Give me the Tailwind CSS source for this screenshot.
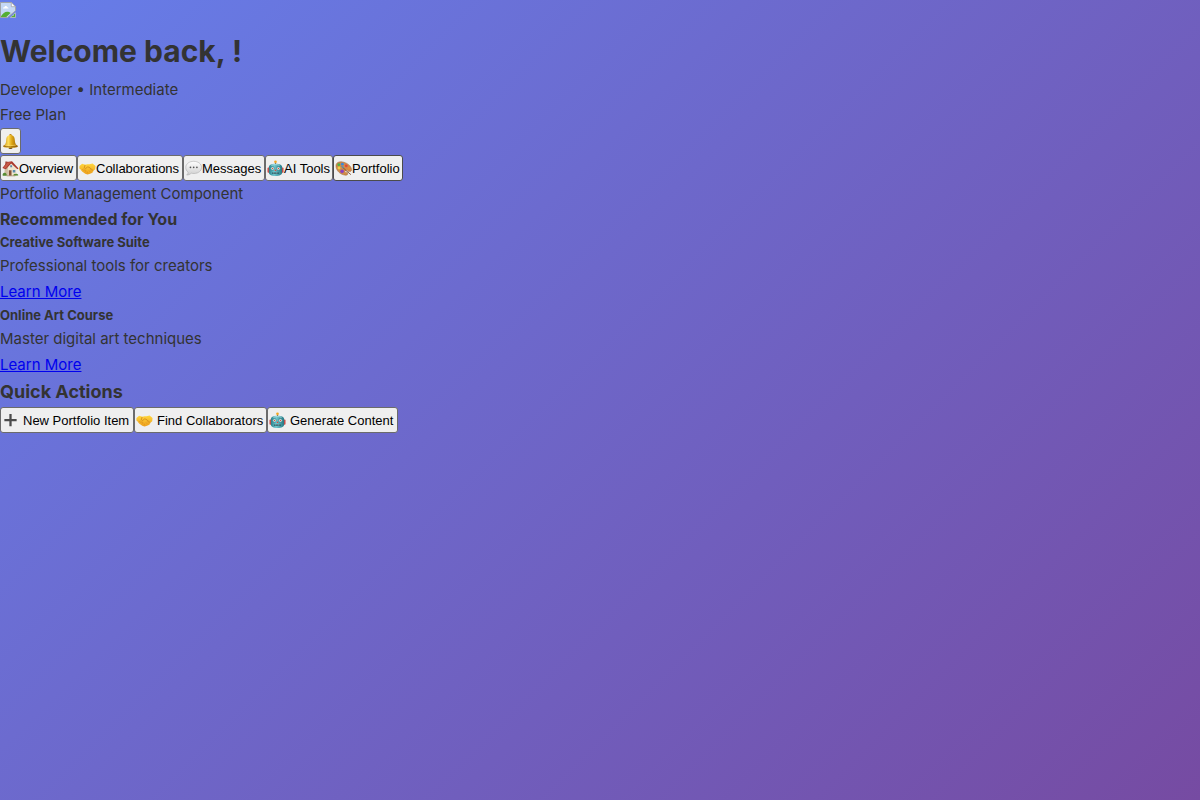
<!DOCTYPE html>
<html lang="en">
<head>
<meta charset="utf-8">
<meta name="viewport" content="width=device-width, initial-scale=1">
<title>Dashboard</title>
<script src="https://cdn.jsdelivr.net/npm/@tailwindcss/browser@4"></script>
</head>
<body class="min-h-screen bg-[linear-gradient(135deg,#667eea_0%,#764ba2_100%)] font-[Inter,sans-serif] text-[15px] leading-[26px] text-[#333]">

<svg class="absolute size-0" aria-hidden="true">
  <defs>
    <linearGradient id="gold" x1="0" x2="1"><stop offset="0" stop-color="#b87a08"/><stop offset=".35" stop-color="#ffdf5c"/><stop offset=".6" stop-color="#dca414"/><stop offset="1" stop-color="#966008"/></linearGradient>
    <linearGradient id="hand" x1="0" y1="0" x2="0" y2="1"><stop offset="0" stop-color="#ffd63d"/><stop offset="1" stop-color="#eea11d"/></linearGradient>
    <linearGradient id="teal" x1="0" x2="1"><stop offset="0" stop-color="#277e8b"/><stop offset=".4" stop-color="#70c8cf"/><stop offset="1" stop-color="#257783"/></linearGradient>
    <linearGradient id="bubble" x1="0" y1="0" x2="0" y2="1"><stop offset="0" stop-color="#fff"/><stop offset="1" stop-color="#cfcfcf"/></linearGradient>
  </defs>
  <symbol id="house" viewBox="0 0 18 18">
    <path d="M2.8 8 9.5 2.7l5.7 5.8v7.8l-9 .6-3.4-1.6z" fill="#efe4cd"/>
    <path d="m2.8 8 3.4-1v9.9l-3.4-1.6z" fill="#cdbd9f"/>
    <path d="M3.5 1.5h2.3V5L3.5 6.5z" fill="#a24c3c"/>
    <path d="m.4 8.6 5-6.5 5.2-.9 6.9 7.8-1.2.8-6.6-6.2-5.6 6.1z" fill="#a9372d"/>
    <path d="m1.5 8.2 4.3-5.5 3.6-.5L4 8.8z" fill="#c65a47"/>
    <path d="M7.2 10.8h2.9v5.8l-2.9.2z" fill="#865237"/>
    <path d="M11.4 10.5h2.7v2.8h-2.7zM8.7 5.6h2v2h-2z" fill="#5b8bad"/>
    <path d="M.6 16.2c0-2 1-3 2.4-2.7 1.4.2 2.2 1.4 2 3.2H1zM12 16.6c.1-1.3 1-2.1 2.3-1.9 1.5-.7 3 .2 2.9 1.6z" fill="#568b31"/>
    <path d="m5 16.5 9-.2v.9H5z" fill="#a88c6a"/>
  </symbol>
  <symbol id="handshake" viewBox="0 0 18 18">
    <path d="M.5 6.300 3.300 4l3.400 1 2.200-.6 2.200.2 3.300-.9 3.100 2.700-.3 3.500-2 1.600-1 2.100-3.200 1.200-2 .6-2.400-.9-3.300-2.200-1.800-2.400L.4 9z" fill="url(#hand)"/>
    <path d="m6.500 5.200-.9 3 1.300.9 2.100-1.700 1.600.2 4.500 3.700" fill="none" stroke="#c77b13" stroke-width=".7"/>
    <path d="m3 10.600 1.600-1.100 1.100.8-1.100 1.500m1.100-1 1.500.2-.8 2m1.500-1.200 1.100.8-.4 1.600m1.600-3 2.200 1.500m-1-3 2.200 2" fill="none" stroke="#dc8d18" stroke-width=".6"/>
  </symbol>
  <symbol id="speech" viewBox="0 0 18 18">
    <path d="M9.200 1.400c4.700 0 8.300 2.700 8.300 6.400s-3.400 6.500-8 6.500c-1 0-2-.1-2.900-.4-1 1.200-2.700 2-4.800 2 1-.9 1.500-1.800 1.500-3C1.700 11.700.8 9.900.8 7.900.8 4.200 4.500 1.400 9.200 1.400z" fill="url(#bubble)" stroke="#aaa" stroke-width=".6"/>
    <circle cx="5.800" cy="7.800" r=".9" fill="#555"/><circle cx="9.200" cy="7.800" r=".9" fill="#555"/><circle cx="12.600" cy="7.800" r=".9" fill="#555"/>
  </symbol>
  <symbol id="robot" viewBox="0 0 18 18">
    <path d="M8.400 2.500h1.200V5H8.400z" fill="#9a6c4b"/><circle cx="9" cy="1.900" r="1.400" fill="#f4a720"/>
    <rect x=".5" y="8" width="2.600" height="5.500" rx="1" fill="#d34b45"/><rect x="14.900" y="8" width="2.600" height="5.500" rx="1" fill="#d34b45"/>
    <path d="M2 7.500C2.200 5 5 4 9 4s6.800 1 7 3.500V13c0 2.700-2.600 4-7 4s-7-1.300-7-4z" fill="url(#teal)"/>
    <path d="M4.700 5.700C6.500 4.600 11.500 4.600 13.300 5.700" fill="none" stroke="#b9e7e7" stroke-width=".8"/>
    <circle cx="5.900" cy="9" r="1.900" fill="#d9f4ef" stroke="#287582" stroke-width=".6"/><circle cx="12.100" cy="9" r="1.900" fill="#d9f4ef" stroke="#287582" stroke-width=".6"/>
    <circle cx="5.900" cy="9" r=".8" fill="#d05443"/><circle cx="12.100" cy="9" r=".8" fill="#d05443"/>
    <path d="m9 9.700 1.100 1.900H7.900z" fill="#d74c43"/><rect x="5.400" y="12.900" width="7.200" height="1.900" rx=".9" fill="#285f69"/><path d="M6.500 13.700h5" stroke="#d5edeb" stroke-width=".7" stroke-dasharray="1 .5"/>
  </symbol>
  <symbol id="palette" viewBox="0 0 18 18">
    <path d="M1 6.200C1 2.800 4.100 1.500 7.800 2c4.700.7 9.500 4.100 9.700 8 .1 2-1.200 2.300-2.700 2-1.700-.3-2.400.4-1.600 1.800.8 1.500-.3 2.500-2.200 2.300C5.900 15.600 1 11.500 1 6.200z" fill="#d08b4a" stroke="#9a6030" stroke-width=".5"/>
    <ellipse cx="12.300" cy="12.100" rx="1.500" ry="1" fill="#f0ece8"/>
    <circle cx="7.800" cy="4.400" r="1.500" fill="#3a87dc"/><circle cx="4" cy="5" r="1.500" fill="#4bb247"/><circle cx="4.300" cy="8.500" r="1.500" fill="#efd13e"/><circle cx="7.500" cy="12" r="1.900" fill="#8b3fc1"/><circle cx="11.900" cy="6.200" r="1.500" fill="#e64535"/><circle cx="14.700" cy="9" r="1.200" fill="#f18b30"/>
    <path d="m7.500 7.100 2.600 2.700 6.700 5.700" fill="none" stroke="#754425" stroke-width=".9"/><path d="m6.200 5.900 2.700 1.200.6 1.900-1.600-.4z" fill="#4e91c3"/>
  </symbol>
  <symbol id="bell" viewBox="0 0 18 18">
    <circle cx="9" cy="2.300" r="1.300" fill="#bd8410"/>
    <ellipse cx="9" cy="15.700" rx="2.200" ry="1.300" fill="#6f4b13"/>
    <path d="M9 2c3.300 0 4.500 2.600 4.600 5.600.1 3.200 1 4.700 3 6.200.7 1.100-1 1.900-7.600 1.900s-8.300-.8-7.600-1.900c2-1.500 2.900-3 3-6.200C4.500 4.600 5.700 2 9 2z" fill="url(#gold)"/>
    <path d="M1.600 13.700c3.300 1.300 11.500 1.300 14.800 0" fill="none" stroke="#8b5c08" stroke-width=".8"/>
    <path d="M3.300 12.700c3 .8 8.400.8 11.400 0" fill="none" stroke="#ffe174" stroke-width=".6"/>
  </symbol>
  <symbol id="plus" viewBox="0 0 18 18"><path d="M7.800 2h2.400v5.300h5.300v2.400h-5.300V15H7.800V9.700H2.500V7.300h5.300z" fill="#4b4b4b"/></symbol>
</svg>

<header>
  <div class="flex h-[26px] items-start pt-0.5">
    <svg class="size-4" viewBox="0 0 16 16" role="img" aria-label="Profile picture">
      <path d="M.5.500h10.800l4.200 4.200v4.100l-8 6.700h-7z" fill="#c5d8f5" stroke="#a2a5a8"/>
      <path d="M11.300.500v4.200h4.200z" fill="#fff" stroke="#a2a5a8" stroke-width=".8"/>
      <path d="M3 6.500c0-1 .7-1.500 1.400-1.300.4-1.700 2.500-1.500 2.700 0 1-.1 1.400.5 1.400 1.300z" fill="#fff"/>
      <path d="M1 14.300c1.500-2.500 4-4.600 6-4.600 1.500 0 2.800.4 3.600 1.200L6.300 15H1z" fill="#54ae32"/>
      <path d="M15.500 10.800v4.700h-5.200l1.900-1.900h1.200v-1.200z" fill="#54ae32" stroke="#c6c8cf" stroke-width=".7"/>
    </svg>
  </div>
  <h1 class="text-[30px] font-bold leading-[51px]">Welcome back, !</h1>
  <p class="leading-[25px]">Developer • Intermediate</p>
  <p>Free Plan</p>
  <button type="button" aria-label="Notifications" class="mb-px flex h-[26px] w-[21px] items-center justify-center rounded-[3px] border border-[#6b6b6b] bg-[#efefef]"><svg class="size-[17px] shrink-0"><use href="#bell"/></svg></button>
</header>

<nav class="flex font-['Liberation_Sans',sans-serif] text-[13px] text-black">
  <button type="button" class="flex h-[26px] w-[77px] items-center whitespace-nowrap rounded-[3px] border border-[#6b6b6b] bg-[#efefef] px-px"><svg class="size-[17px] shrink-0"><use href="#house"/></svg><span class="pt-0.5">Overview</span></button>
  <button type="button" class="flex h-[26px] w-[106px] items-center whitespace-nowrap rounded-[3px] border border-[#6b6b6b] bg-[#efefef] px-px"><svg class="size-[17px] shrink-0"><use href="#handshake"/></svg><span class="pt-0.5">Collaborations</span></button>
  <button type="button" class="flex h-[26px] w-[82px] items-center whitespace-nowrap rounded-[3px] border border-[#6b6b6b] bg-[#efefef] px-px"><svg class="size-[17px] shrink-0"><use href="#speech"/></svg><span class="pt-0.5">Messages</span></button>
  <button type="button" class="flex h-[26px] w-[68px] items-center whitespace-nowrap rounded-[3px] border border-[#6b6b6b] bg-[#efefef] px-px"><svg class="size-[17px] shrink-0"><use href="#robot"/></svg><span class="pt-0.5">AI Tools</span></button>
  <button type="button" class="flex h-[26px] w-[70px] items-center whitespace-nowrap rounded-[3px] border border-[#4b4b4b] bg-[#efefef] px-px"><svg class="size-[17px] shrink-0"><use href="#palette"/></svg><span class="pt-0.5">Portfolio</span></button>
</nav>

<main>
  <p class="leading-[25px]">Portfolio Management Component</p>
  <section>
    <h2 class="text-base font-bold leading-[26px]">Recommended for You</h2>
    <article>
      <h3 class="text-[13px] font-bold leading-[21px]">Creative Software Suite</h3>
      <p>Professional tools for creators</p>
      <p><a href="#" class="text-[#0000ee] underline">Learn More</a></p>
    </article>
    <article>
      <h3 class="text-[13px] font-bold leading-[21px]">Online Art Course</h3>
      <p>Master digital art techniques</p>
      <p class="leading-[25px]"><a href="#" class="text-[#0000ee] underline">Learn More</a></p>
    </article>
  </section>
  <section>
    <h2 class="text-lg font-bold leading-[30px]">Quick Actions</h2>
    <div class="flex font-['Liberation_Sans',sans-serif] text-[13px] text-black">
      <button type="button" class="flex h-[26px] w-[134px] items-center gap-1 whitespace-nowrap rounded-[3px] border border-[#6b6b6b] bg-[#efefef] px-px"><svg class="size-[17px] shrink-0"><use href="#plus"/></svg><span class="pt-0.5">New Portfolio Item</span></button>
      <button type="button" class="flex h-[26px] w-[133px] items-center gap-1 whitespace-nowrap rounded-[3px] border border-[#6b6b6b] bg-[#efefef] px-px"><svg class="size-[17px] shrink-0"><use href="#handshake"/></svg><span class="pt-0.5">Find Collaborators</span></button>
      <button type="button" class="flex h-[26px] w-[131px] items-center gap-1 whitespace-nowrap rounded-[3px] border border-[#6b6b6b] bg-[#efefef] px-px"><svg class="size-[17px] shrink-0"><use href="#robot"/></svg><span class="pt-0.5">Generate Content</span></button>
    </div>
  </section>
</main>
</body>
</html>
